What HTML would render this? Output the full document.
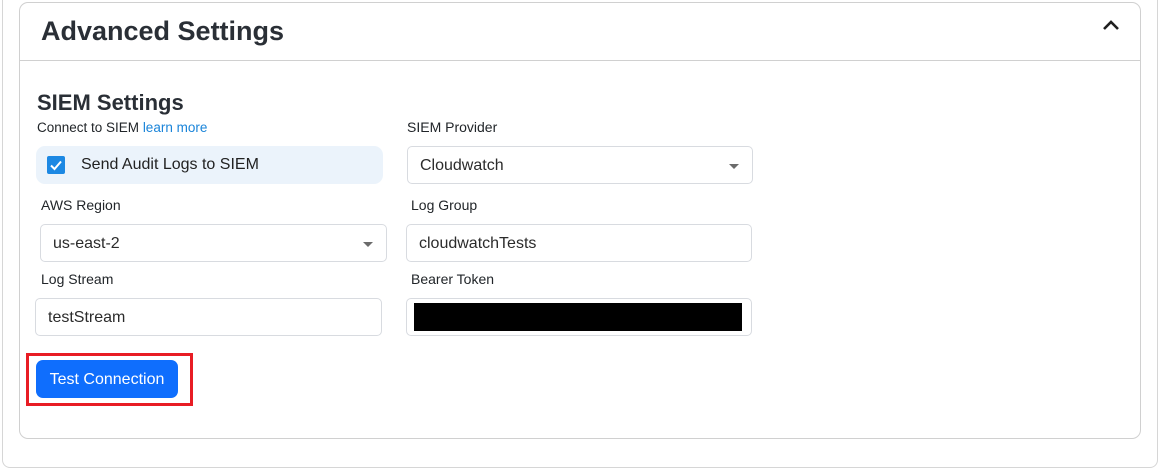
<!DOCTYPE html>
<html><head><style>
*{box-sizing:border-box;margin:0;padding:0}
body{width:1166px;height:475px;background:#fff;font-family:"Liberation Sans",Arial,sans-serif;color:#212529;position:relative;overflow:hidden}
.abs{position:absolute}
.outer{left:2px;top:-10px;width:1156px;height:478px;border:1px solid #d6d6d6;border-radius:8px}
.card{left:19px;top:2px;width:1122px;height:437px;border:1px solid #d0d0d0;border-radius:9px}
.div{left:19px;top:60px;width:1122px;height:1px;background:#d0d0d0}
.lbl{font-size:14px;color:#212529}
.box{border:1px solid #d8dbe0;border-radius:5px;background:#fff;font-size:16px;color:#2b2b2b;padding-left:12px;padding-top:2px;display:flex;align-items:center}
.caret{position:absolute;right:13px;top:17px;width:0;height:0;border-left:5px solid transparent;border-right:5px solid transparent;border-top:5px solid #6b6b6b}
</style></head><body>
<div class="abs outer"></div>
<div class="abs card"></div>
<div class="abs div"></div>
<div class="abs" style="left:41px;top:16px;font-size:27px;color:#2a2f36;font-weight:bold">Advanced Settings</div>
<svg class="abs" style="left:1102px;top:19px" width="18" height="12" viewBox="0 0 18 12"><path d="M2 10 L9 3 L16 10" fill="none" stroke="#1f1f1f" stroke-width="2.6"/></svg>
<div class="abs" style="left:37px;top:90px;font-size:22px;color:#2a2f36;font-weight:bold">SIEM Settings</div>
<div class="abs lbl" style="left:37px;top:120px;font-size:13.5px">Connect to SIEM <span style="color:#1a84d9">learn more</span></div>
<div class="abs" style="left:36px;top:146px;width:347px;height:38px;background:#ebf3fb;border-radius:9px"></div>
<div class="abs" style="left:47px;top:156px;width:18px;height:18px;background:#1c88e3;border-radius:2px"></div>
<svg class="abs" style="left:47px;top:156px" width="18" height="18" viewBox="0 0 18 18"><path d="M4 9.5 L7.5 13 L14 5.5" fill="none" stroke="#fff" stroke-width="2"/></svg>
<div class="abs" style="left:81px;top:156px;font-size:16px;color:#222">Send Audit Logs to SIEM</div>
<div class="abs lbl" style="left:407px;top:119px">SIEM Provider</div>
<div class="abs box" style="left:407px;top:146px;width:346px;height:38px">Cloudwatch<span class="caret"></span></div>
<div class="abs lbl" style="left:41px;top:197px">AWS Region</div>
<div class="abs box" style="left:40px;top:224px;width:347px;height:38px">us-east-2<span class="caret"></span></div>
<div class="abs lbl" style="left:411px;top:197px">Log Group</div>
<div class="abs box" style="left:406px;top:224px;width:346px;height:38px">cloudwatchTests</div>
<div class="abs lbl" style="left:41px;top:271px">Log Stream</div>
<div class="abs box" style="left:35px;top:298px;width:347px;height:38px">testStream</div>
<div class="abs lbl" style="left:411px;top:271px">Bearer Token</div>
<div class="abs box" style="left:406px;top:298px;width:346px;height:38px"></div>
<div class="abs" style="left:414px;top:303px;width:328px;height:28px;background:#000"></div>
<div class="abs" style="left:26px;top:353px;width:167px;height:53px;border:3px solid #e81c24"></div>
<div class="abs" style="left:36px;top:360px;width:142px;height:38px;background:#0f6efd;border-radius:7px;color:#fff;font-size:16px;display:flex;align-items:center;justify-content:center;padding-top:1px">Test Connection</div>
</body></html>
